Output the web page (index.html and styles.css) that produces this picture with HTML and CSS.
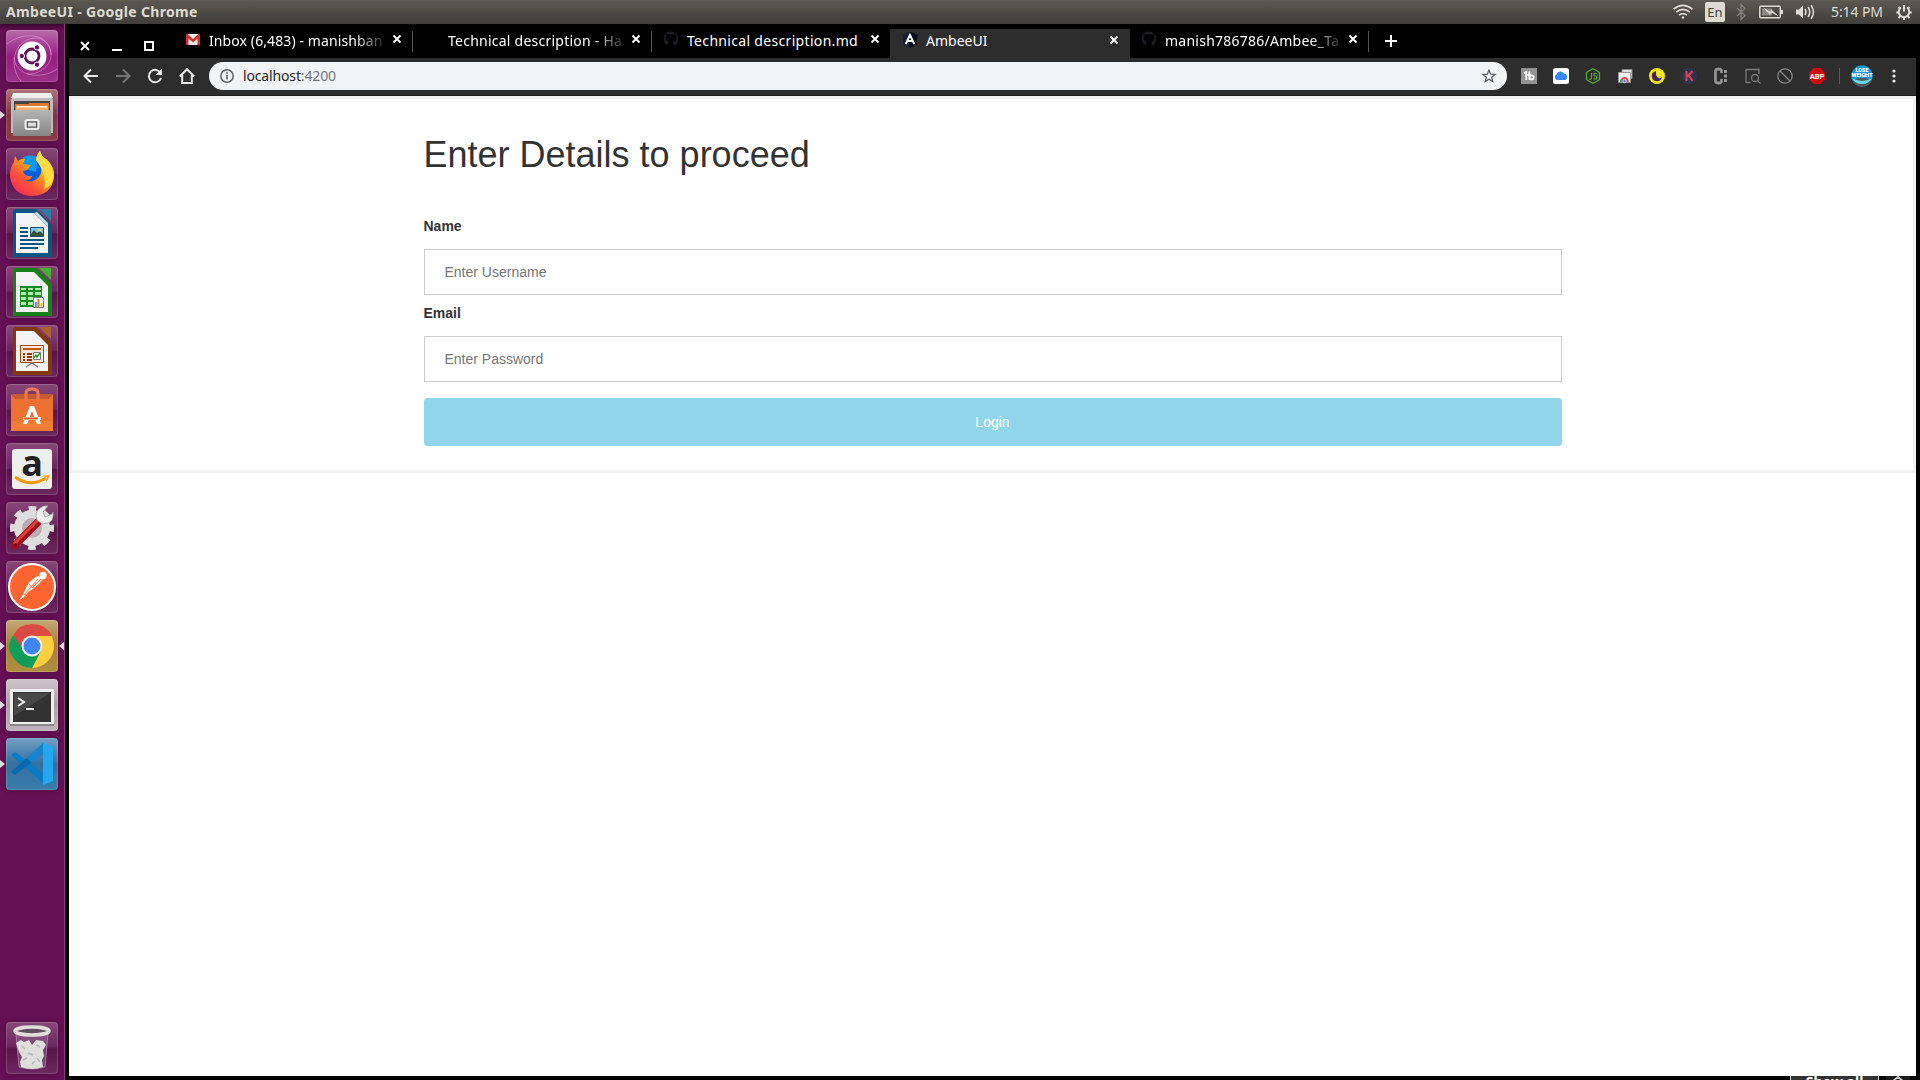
FILE: index.html
```html
<!DOCTYPE html>
<html lang="en">
<head>
<meta charset="utf-8">
<title>AmbeeUI</title>
<link rel="stylesheet" href="styles.css">
</head>
<body>
<header class="panel">
  <span class="panel-title">AmbeeUI - Google Chrome</span>
  <div class="indicators">
    <svg class="wifi" width="20" height="16" viewBox="0 0 20 16" fill="none" stroke="#dfdbd2" stroke-width="1.6"><path d="M.5 5.2Q10-2.6 19.5 5.2M3.2 8.2Q10 2.6 16.800 8.200M6 11.200Q10 8 14 11.200"/><circle cx="10" cy="13.500" r="1.200" fill="#dfdbd2" stroke="none"/></svg>
    <span class="lang">En</span>
    <svg class="bt" width="10" height="18" viewBox="0 0 10 18" fill="none" stroke="#85837b" stroke-width="1.300"><path d="M1 5l8 7.500-4 4V1.500l4 4L1 13"/></svg>
    <svg class="battery" width="24" height="14" viewBox="0 0 24 14"><rect x=".8" y="1.300" width="20.500" height="11.400" rx="1" fill="none" stroke="#dfdbd2" stroke-width="1.500"/><path d="M22 5h2v4h-2z" fill="#dfdbd2"/><path d="M3 3.500h10v7H3z" fill="#8b897f"/><path d="M5.500 3.500l6 4 1-2.500 6 5.500-6.500-3.500-1 2.500z" fill="#dfdbd2" stroke="#dfdbd2" stroke-width=".6"/></svg>
    <svg class="sound" width="21" height="16" viewBox="0 0 21 16"><path d="M1 5.500h3l4-4v13l-4-4H1z" fill="#dfdbd2"/><path d="M10 5q2 3 0 6M13 3q3.500 5 0 10M16 1.200q5 6.800 0 13.600" fill="none" stroke="#dfdbd2" stroke-width="1.500"/></svg>
    <span class="clock">5:14 PM</span>
    <svg class="gear" width="16" height="16" viewBox="0 0 16 16" fill="none" stroke="#dfdbd2"><path d="M5 3.500a5.300 5.300 0 1 0 6 0" stroke-width="2"/><path d="M8 1v6.500" stroke-width="2"/><path d="M.2 8.500h2.500M13.300 8.500h2.500M2.500 3l1.700 1.700M13.500 3l-1.700 1.700M2.500 14l1.700-1.700M13.500 14l-1.700-1.700M8 13.500V16" stroke-width="2"/></svg>
  </div>
</header>

<div class="desktop">
  <nav class="launcher">
    <div class="tile dash"><svg viewBox="0 0 52 52"><g fill="none" stroke="#e5a9d7" stroke-opacity=".5"><path d="M1 14C17 1 42 3 45 22c2 13-12 23-24 22M15 51C2 36 8 10 28 8c10-1 17 8 17 17M51 39C36 50 9 47 8 27"/></g><circle cx="26" cy="26" r="14.500" fill="#fff"/><circle cx="26" cy="26" r="7" fill="none" stroke="#611253" stroke-width="2.800"/><g fill="#611253" stroke="#fff"><circle cx="15.800" cy="26" r="2.700"/><circle cx="31" cy="17.300" r="2.700"/><circle cx="31" cy="34.700" r="2.700"/></g></svg></div>
    <div class="tile files running"><svg viewBox="0 0 52 52"><path d="M8 4h36l3 7v33H5V11z" fill="#bdbdbd"/><path d="M7 4h38l2 5H5z" fill="#eee"/><path d="M8 12h36v11H8z" fill="#444"/><path d="M9 15h13l2-1h19v8H9z" fill="#dc7835"/><path d="M10 17h32v5H10z" fill="#f7ad62"/><path d="M11 17h30v1.500H11z" fill="#fff0dc"/><path d="M7 22l2-1h34l2 1v25H7z" fill="url(#steel)"/><rect x="19.500" y="31" width="13" height="9" rx="2" fill="none" stroke="#ededed" stroke-width="2"/><rect x="21.500" y="33" width="9" height="5" fill="#ddd" stroke="#555"/></svg></div>
    <div class="tile"><svg viewBox="0 0 52 52"><defs><linearGradient id="fox" x1=".9" y1="0" x2=".1" y2="1"><stop stop-color="#fff44f"/><stop offset=".4" stop-color="#ffad16"/><stop offset=".65" stop-color="#ff5636"/><stop offset="1" stop-color="#f42662"/></linearGradient></defs><circle cx="26" cy="25" r="17" fill="#075fda"/><path d="M17 9q8-3 15 0l-2 15-11-3z" fill="#0a9af1"/><path d="M9 8l3 5q4-3 7-2l-2 5 8 1-4 5-4 1q1 6 9 5-1 5-8 4 8 4 15-3Q39 21 30 12q1-6 4-9 1 5 6 8 8 6 8 18-2 18-22 19Q6 47 4 28q0-9 4-14z" fill="url(#fox)"/><path d="M30 12q1-6 4-9 1 5 6 8 8 7 8 17-2 11-10 13 4-13-8-29" fill="#ffdc3f"/></svg></div>
    <div class="tile"><svg viewBox="0 0 52 52"><path d="M9 2h21l16 16v32H7V4z" fill="#075683"/><path d="M10 6h18l14 14v26H10z" fill="#f3f3f3"/><path d="M28 6l14 14v-4L31 5z" fill="#c6dce9"/><path d="M33 2h12v12z" fill="#2b7ca8"/><path d="M14 21h8M14 25h8M14 29h8M14 33h24M14 37h24M14 41h18" stroke="#075683" stroke-width="1.800"/><path d="M24.500 20.500h13v9h-13z" fill="#79caec" stroke="#164f73"/><path d="M25 29v-2l3-4 3 3 3-2 3 3v2z" fill="#3a4c3a"/><circle cx="34" cy="23" r="1.500" fill="#ffd641"/></svg></div>
    <div class="tile"><svg viewBox="0 0 52 52"><path d="M9 2h21l16 16v32H7V4z" fill="#168116"/><path d="M10 6h18l14 14v26H10z" fill="#f3f3f3"/><path d="M33 2h12v12z" fill="#48ae36"/><path d="M14 20h22v21H14z" fill="#178c21"/><path d="M15 22h5v2h-5zM22 22h5v2h-5zM29 22h6v2h-6zM15 26h5v3h-5zM22 26h5v3h-5zM29 26h6v3h-6zM15 31h5v3h-5zM22 31h5v3h-5zM15 36h5v3h-5zM22 36h5v3h-5z" fill="#b4f1a8"/><path d="M27.500 31.500h10v10h-10z" fill="#fff" stroke="#777"/><path d="M29 36h2v5h-2z" fill="#38a6e4"/><path d="M31.500 33h2v8h-2z" fill="#ef6f15"/><path d="M34.500 37h2v4h-2z" fill="#efc51c"/></svg></div>
    <div class="tile"><svg viewBox="0 0 52 52"><path d="M9 2h21l16 16v32H7V4z" fill="#81390c"/><path d="M10 6h18l14 14v26H10z" fill="#f3f3f3"/><path d="M33 2h12v12z" fill="#af602e"/><path d="M14.500 20.500h23v17h-23z" fill="#fce5d4" stroke="#a44713"/><path d="M17 24h18" stroke="#cc5515" stroke-width="2"/><path d="M17 29h2M21 29h5M17 32h2M21 32h5M17 35h2M21 35h5" stroke="#8f390d" stroke-width="1.800"/><path d="M27.500 27.500h7v7h-7z" fill="#fff" stroke="#777"/><path d="M28 33l2-3 1 2 3-4" fill="none" stroke="#27a031" stroke-width="1.500"/><path d="M26 38l-6 4M26 38l6 4M25 38h2" stroke="#777" stroke-width="1.500"/></svg></div>
    <div class="tile"><svg viewBox="0 0 52 52"><path d="M5 10l4 4h34l4-4v37H5z" fill="#ef712f"/><path d="M6 10h40l-3 5H9z" fill="#c65a36"/><path d="M5 37h42v10H5z" fill="#f27b35"/><path d="M20 17V9q0-4 6-4t6 4v8" fill="none" stroke="#e97955" stroke-width="3"/><path d="M24 22h4l7 18h-4l-5-13-5 13h-4z" fill="#fff"/><path d="M17 33h18v3H17z" fill="#fff"/><path d="M18 33.500h14v2H18z" fill="#ed5c24"/></svg></div>
    <div class="tile"><svg viewBox="0 0 52 52"><rect x="6" y="6" width="40" height="40" rx="3" fill="#eee"/><text x="26" y="33" text-anchor="middle" font-family="Open Sans, sans-serif" font-size="36" font-weight="700" fill="#222">a</text><path d="M9 34q15 11 31 1" fill="none" stroke="#ff9900" stroke-width="2.800"/><path d="M35 33l8-1q0 5-3 7l1-5z" fill="#ff9900"/></svg></div>
    <div class="tile"><svg viewBox="0 0 52 52"><circle cx="26" cy="26" r="12" fill="#b9adb6"/><g fill="none"><circle cx="26" cy="26" r="14" stroke="#dedede" stroke-width="8"/><circle cx="26" cy="26" r="19.500" stroke="#dedede" stroke-width="5" stroke-dasharray="7.660 7.660" stroke-dashoffset="4"/><path d="M9 43L33 19" stroke="#a50e17" stroke-width="7.500" stroke-linecap="round"/><path d="M9 41L31 19" stroke="#d84142" stroke-width="3" stroke-linecap="round"/></g><path d="M31 18q-3-8 3-12 4-3 8-2l-5 6 2 5 7-3 1-2q1 9-5 11l-6 1z" fill="#eee" stroke="#999" stroke-width=".7"/><circle cx="9.500" cy="42.500" r="1.300" fill="#600"/></svg></div>
    <div class="tile"><svg viewBox="0 0 52 52"><circle cx="26" cy="26" r="23" fill="#ff6530" stroke="#fff" stroke-width="2"/><circle cx="37" cy="14.500" r="3.700" fill="#fff"/><path d="M32 15q-9 4-13 14l-2 5-4 5q6-3 9-8 9-5 15-13z" fill="#fff"/><path d="M32 18L18 34M35 18l-9 9M23 23l4 4" stroke="#ff6530" stroke-width="1"/></svg></div>
    <div class="tile chrome running active"><svg viewBox="0 0 52 52"><circle cx="26" cy="26" r="22" fill="#ffcd40"/><path d="M26 26L7 15Q-1 28 8 39q7 9 18 9l9-17z" fill="#109d58"/><path d="M7 15Q13 4 26 4q14 0 20 12H26l-9 13z" fill="#db4b42"/><circle cx="26" cy="26" r="10.500" fill="#f1f1f1"/><circle cx="26" cy="26" r="8.500" fill="#4286f5"/></svg></div>
    <div class="tile terminal running"><svg viewBox="0 0 52 52"><rect x="4" y="10" width="44" height="37" rx="1" fill="#eee"/><path d="M4 45h44v2H4z" fill="#888"/><path d="M7 13h38v30H7z" fill="#323232"/><path d="M8 14h36L8 37z" fill="#484848"/><path d="M12 19l6 4-6 4" fill="none" stroke="#eee" stroke-width="2"/><path d="M20 30h8" stroke="#eee" stroke-width="2"/></svg></div>
    <div class="tile code running"><svg viewBox="0 0 52 52"><path d="M5 17l4-3 29 22v10z" fill="#087bc7"/><path d="M5 34l4 3 29-22V5z" fill="#0969b0"/><path d="M37 5l10 4v34l-10 4z" fill="#24a7f1"/><path d="M21 20L37 5v11L26 25z" fill="#1685ce"/></svg></div>
    <div class="tile trash"><svg viewBox="0 0 52 52"><path d="M10 12h32l-3 33q-13 4-26 0z" fill="#a183a0" fill-opacity=".35" stroke="#b795b2" stroke-width=".7"/><path d="M10 21l5-3 3 2 5-2 3 5 4-5 7 1 3 4-3 5 1 6-2 4 1 7q-11 4-22 0l-1-5 2-5-3-5z" fill="#dededb"/><path d="M16 24l3 3M30 23l4 2M22 31l5 2M17 38l4-2M31 36l3 4M26 42l3-3" fill="none" stroke="#b7b8b5" stroke-width="1.500"/><ellipse cx="26" cy="9" rx="17" ry="4" fill="#66505f" stroke="#dedfdc" stroke-width="3.500"/></svg></div>
  </nav>

  <main class="window">
    <div class="tabstrip">
      <div class="controls">
        <svg width="10" height="10" viewBox="0 0 10 10"><path d="M1 1l8 8M9 1L1 9" stroke="#fff" stroke-width="1.800"/></svg>
        <svg width="10" height="10" viewBox="0 0 10 10"><path d="M0 9h10" stroke="#fff" stroke-width="2"/></svg>
        <svg width="10" height="10" viewBox="0 0 10 10"><path d="M1 1h8v8H1z" fill="none" stroke="#fff" stroke-width="2"/></svg>
      </div>
      <div class="tab"><svg class="fav" viewBox="0 0 16 16"><path d="M1 3h14v11H1z" fill="#eee"/><path d="M1 3h2l5 5 5-5h2v11h-2.500V7.500L8 11.500l-4.500-4V14H1z" fill="#d93025"/><path d="M3 3h10L8 7.500z" fill="#fff"/></svg><span class="label t1 fade">Inbox (6,483) - manishban</span><svg class="close" viewBox="0 0 10 10"><path d="M1.500 1.500l7 7M8.500 1.500l-7 7"/></svg></div>
      <div class="tab"><span class="fav"></span><span class="label t2 fade">Technical description - Ha</span><svg class="close" viewBox="0 0 10 10"><path d="M1.500 1.500l7 7M8.500 1.500l-7 7"/></svg></div>
      <div class="tab before-active"><svg class="fav" viewBox="0 0 16 16"><path id="cat" d="M5.500 15v-2q-3 .5-4-1.500M5.500 15.200C-2 12-.5 0 8 .5c8.500.3 10 11.500 2.500 14.700v-3l-.5-1.500c5-1 3-5 2.500-6V2.700l-2 .8q-2.500-.7-5 0l-2-.8v2C2 7 2.500 10 6 10.700l-.5 1.500z" fill="#191c20"/></svg><span class="label t3">Technical description.md</span><svg class="close" viewBox="0 0 10 10"><path d="M1.500 1.500l7 7M8.500 1.500l-7 7"/></svg></div>
      <div class="tab current"><svg class="fav" viewBox="0 0 16 16"><path d="M8 0l7.500 2.500-1 10L8 16l-6.500-3.500-1-10z" fill="#1c1d2e"/><path d="M8 0l7.500 2.500-1 10L8 16z" fill="#090a1b"/><path d="M3.700 12L8 3l4.300 9M5.500 9h5" fill="none" stroke="#fff" stroke-width="1.900"/></svg><span class="label t4">AmbeeUI</span><svg class="close" viewBox="0 0 10 10"><path d="M1.500 1.500l7 7M8.500 1.500l-7 7"/></svg></div>
      <div class="tab"><svg class="fav" viewBox="0 0 16 16"><use href="#cat"/></svg><span class="label t5 fade">manish786786/Ambee_Ta</span><svg class="close" viewBox="0 0 10 10"><path d="M1.500 1.500l7 7M8.500 1.500l-7 7"/></svg></div>
      <svg class="plus" width="12" height="12" viewBox="0 0 12 12"><path d="M6 0v12M0 6h12" stroke="#fff" stroke-width="2"/></svg>
    </div>

    <div class="toolbar">
      <div class="nav">
        <svg viewBox="0 0 16 16"><path d="M15 8H2M8 1.500L1.500 8 8 14.500"/></svg>
        <svg class="disabled" viewBox="0 0 16 16"><path d="M1 8h13M8 1.500L14.500 8 8 14.500"/></svg>
        <svg viewBox="0 0 16 16"><path d="M13.500 5A6.200 6.200 0 1 0 14 10"/><path d="M15 .5V7H8.500z" fill="#e8e8e8" stroke="none"/></svg>
        <svg viewBox="0 0 16 16"><path d="M.8 8.500L8 1.200l7.200 7.300M3.200 7v8h9.600V7"/></svg>
      </div>
      <div class="omnibox">
        <svg width="14" height="14" viewBox="0 0 14 14"><circle cx="7" cy="7" r="6.200" fill="none" stroke="#5f6368" stroke-width="1.500"/><path d="M7 6v4.500M7 3v1.700" stroke="#5f6368" stroke-width="1.600"/></svg>
        <span class="url">localhost<span class="port">:4200</span></span>
        <svg class="star" width="14" height="14" viewBox="0 0 14 14"><path d="M7 1.200l1.700 4 4.300.3-3.300 2.800 1 4.200L7 10.300l-3.700 2.200 1-4.200L1 5.500l4.300-.3z" fill="none" stroke="#5a5d61" stroke-width="1.300"/></svg>
      </div>
      <div class="extensions">
        <svg viewBox="0 0 16 16"><path d="M0 0h16v16H0z" fill="#929292"/><path d="M3 5.200l2.300-1.200v8M8.300 3.500v8M5.300 6.800h4.500" fill="none" stroke="#fff" stroke-width="1.700"/><circle cx="10.600" cy="9.400" r="2" fill="none" stroke="#fff" stroke-width="1.700"/></svg>
        <svg viewBox="0 0 16 16"><rect width="16" height="16" rx="2.500" fill="#fff"/><path d="M4 12a3 3 0 0 1-.3-5.700A4 4 0 0 1 11 5.500a3.500 3.500 0 0 1 1.500 6.500z" fill="#3489f5"/></svg>
        <svg viewBox="0 0 16 16"><path d="M8 .7L14.500 4.300v7.400L8 15.300 1.500 11.700V4.300z" fill="none" stroke="#56a832" stroke-width="1.300"/><path d="M6.500 5v5q0 1.500-2.500 1.200M12 5.500H9v2.300l2.700.4v2.600H8.500" fill="none" stroke="#56a832" stroke-width="1.200"/></svg>
        <svg viewBox="0 0 16 16"><path d="M5 1.500h10v9H5z" fill="#ddd" stroke="#888"/><path d="M1.500 4.500h12v10h-12z" fill="#f2f2f2" stroke="#999"/><path d="M3 14q1-5 4.500-5t4.500 5z" fill="#de4839"/><path d="M3 14q0-2 1-3l3 3z" fill="#35a853"/><circle cx="7.500" cy="13" r="1.700" fill="#4d85ea" stroke="#fff" stroke-width=".6"/></svg>
        <svg viewBox="0 0 16 16"><circle cx="8" cy="8" r="8" fill="#f8e71c"/><path d="M7 3a5.200 5.200 0 1 0 6 6.300Q11.500 10.500 9.700 10 6.500 8.500 7 3z" fill="#472466"/></svg>
        <svg viewBox="0 0 16 16"><circle cx="8" cy="8" r="8" fill="#2b344b"/><path d="M5.500 3v10M11.500 3L6.500 8.500M8 7.500l3.500 5.500" stroke="#d9434f" stroke-width="2"/></svg>
        <svg viewBox="0 0 16 16"><path d="M8.500 5V3q0-2-3-2T2.500 3v10q0 2 3 2t3-2v-2" fill="none" stroke="#929292" stroke-width="2.800"/><path d="M11 2h3v3h-3zM11 6.500h3v3h-3zM11 11h3v3h-3z" fill="#929292"/></svg>
        <svg viewBox="0 0 16 16" fill="none" stroke="#7a7a7a" stroke-width="1.300"><path d="M5.500 14.500H1v-13h13V6"/><circle cx="10" cy="10" r="3.500"/><path d="M12.500 12.500l3 3"/></svg>
        <svg viewBox="0 0 16 16" fill="none" stroke="#898989" stroke-width="1.300"><circle cx="8" cy="8" r="7.200"/><path d="M3 3l10 10"/></svg>
        <svg viewBox="0 0 16 16"><path d="M4.700 0h6.600L16 4.700v6.600L11.300 16H4.700L0 11.300V4.700z" fill="#d40b0c"/><text x="8" y="10.800" text-anchor="middle" font-family="Roboto, sans-serif" font-size="7.500" font-weight="700" fill="#fff">ABP</text></svg>
      </div>
      <span class="divider"></span>
      <svg class="avatar" viewBox="0 0 22 22"><circle cx="11" cy="11" r="10.700" fill="#1797d4"/><path d="M1 15q10-4 20 0-2 6-10 6.500Q4 21 1 15z" fill="#555"/><path d="M1 13q10 6 20 0-3 6-10 6T1 13z" fill="#65d9ec"/><g fill="#fff" font-family="Roboto, sans-serif" font-weight="900" text-anchor="middle"><text x="11" y="6.800" font-size="5.500">LOSE</text><text x="11" y="12" font-size="5.800" textLength="21" lengthAdjust="spacingAndGlyphs">WEIGHT</text></g></svg>
      <svg class="menu" width="4" height="14" viewBox="0 0 4 14" fill="#eee"><circle cx="2" cy="2" r="1.600"/><circle cx="2" cy="7" r="1.600"/><circle cx="2" cy="12" r="1.600"/></svg>
    </div>

    <section class="page">
      <form class="login">
        <div class="container">
          <h2>Enter Details to proceed</h2>
          <label for="user">Name</label>
          <input id="user" type="text" placeholder="Enter Username">
          <label for="pass">Email</label>
          <input id="pass" type="text" placeholder="Enter Password">
          <button type="button">Login</button>
        </div>
      </form>
    </section>
    <div class="underlay"><span class="show-all">Show all</span><span class="caret"><svg width="12" height="4" viewBox="0 0 12 4"><path d="M1 5l5-4 5 4" fill="none" stroke="#ccc" stroke-width="1.800"/></svg></span></div>
  </main>
</div>
<svg width="0" height="0" class="defs"><defs><linearGradient id="steel" x2="0" y2="1"><stop stop-color="#b5b5b5"/><stop offset="1" stop-color="#868686"/></linearGradient></defs></svg>
</body>
</html>
```
FILE: styles.css
```css
* { box-sizing: border-box; }
body {
  margin: 0;
  width: 1920px;
  height: 1080px;
  overflow: hidden;
  display: flex;
  flex-direction: column;
  background: #000;
  font-family: "Noto Sans", sans-serif;
}
svg { display: block; flex: none; overflow: visible; }
.defs { position: absolute; }

.panel {
  height: 24px;
  flex: none;
  display: flex;
  align-items: center;
  justify-content: space-between;
  padding: 0 8px 0 6px;
  background: linear-gradient(#5f5d4f 0, #59564e 2px, #3f3e39 24px);
  color: #dfdbd2;
  font-size: 14px;
}
.panel-title { padding-bottom: 2px; font-weight: 700; letter-spacing: .33px; white-space: nowrap; }
.indicators { display: flex; align-items: center; }
.lang {
  width: 20px;
  height: 20px;
  margin: 0 11px 0 12px;
  border-radius: 2px;
  background: #dfdbd2;
  color: #45443f;
  font-size: 13px;
  line-height: 20px;
  text-align: center;
}
.battery { margin: 0 12px 0 13px; }
.clock { width: 52px; margin: 0 13px 0 15px; padding-bottom: 2px; white-space: nowrap; letter-spacing: -.1px; }

.desktop { flex: 1; display: flex; min-height: 0; }
.launcher {
  width: 65px;
  flex: none;
  display: flex;
  flex-direction: column;
  gap: 7px;
  padding: 6px 0 6px 6px;
  background: linear-gradient(#3d0733 0, #651054 6px);
  border-right: 1px solid #8b3b7b;
}
.tile {
  position: relative;
  width: 52px;
  height: 52px;
  flex: none;
  border-radius: 4px;
  background: linear-gradient(#894778, #6b2560 48%, #591449 52%, #6c2860);
  box-shadow: inset 0 0 0 1px rgba(255,255,255,.16), 0 0 5px rgba(30,0,25,.35);
}
.tile svg { width: 52px; height: 52px; }
.dash { background: linear-gradient(#b96cab, #981c83 50%, #9b3389); }
.files { background: linear-gradient(#ae747b, #813443 50%, #8d3c44); }
.chrome { background: linear-gradient(#c6a777, #a38138 50%, #b28e3f); }
.terminal { background: linear-gradient(#cfc3cc, #aaa0a7 50%, #bcb4ba); }
.code { background: linear-gradient(#739fc2, #356f9f 50%, #397caa); }
.trash { margin-top: auto; }
.running::before, .active::after {
  content: "";
  position: absolute;
  top: 22px;
  border: 4px solid transparent;
}
.running::before { left: -6px; border-left: 5px solid #ddd; border-right: 0; }
.active::after { right: -6px; border-right: 5px solid #ddd; border-left: 0; }

.window {
  flex: 1;
  min-width: 0;
  padding: 0 4px;
  display: flex;
  flex-direction: column;
}
.tabstrip { height: 34px; flex: none; display: flex; color: #fff; }
.controls { width: 105px; padding: 17px 0 0 11px; display: flex; gap: 22px; }
.tab {
  position: relative;
  width: 239px;
  height: 34px;
  padding: 0 11px 4px 11px;
  display: flex;
  align-items: center;
}
.tab::after {
  content: "";
  position: absolute;
  right: 0;
  top: 7px;
  width: 1px;
  height: 21px;
  background: #555;
}
.before-active::after, .current::after { display: none; }
.before-active { border-bottom-right-radius: 8px; }
.current {
  width: 240px;
  height: 29px;
  margin-top: 5px;
  margin-left: -1px;
  padding: 0 11px 8px 12px;
  background: #2d2d2d;
}
.fav { width: 16px; height: 16px; flex: none; overflow: hidden; }
.label {
  width: 176px;
  margin-left: 8px;
  padding-top: 4px;
  font-size: 14px;
  line-height: 20px;
  white-space: nowrap;
}
.current .label { padding-top: 2px; }
.t1 { letter-spacing: .1px; }
.t2 { letter-spacing: .24px; }
.t3 { letter-spacing: .32px; }
.t5 { letter-spacing: .25px; }
.fade { -webkit-mask-image: linear-gradient(90deg, #000 145px, transparent 180px); mask-image: linear-gradient(90deg, #000 145px, transparent 180px); }
.close { width: 10px; height: 10px; margin-left: 7px; stroke: #fff; stroke-width: 1.900; }
.plus { margin: 11px 0 0 16px; }

.toolbar {
  height: 38px;
  flex: none;
  display: flex;
  align-items: center;
  padding: 0 20px 2px 14px;
  background: #2d2d2d;
  border-bottom: 1px solid #1c1c1c;
}
.nav { display: flex; gap: 16px; width: 126px; }
.nav svg { width: 16px; height: 16px; fill: none; stroke: #e8e8e8; stroke-width: 2; }
.nav .disabled { stroke: #777; }
.omnibox {
  width: 1298px;
  height: 28px;
  padding: 0 11px;
  border-radius: 14px;
  background: #f1f3f4;
  display: flex;
  align-items: center;
}
.url { margin-left: 9px; font-size: 14px; line-height: 20px; color: #25272a; letter-spacing: -.15px; }
.port { color: #70757a; }
.star { margin-left: auto; }
.extensions { display: flex; gap: 16px; margin-left: 14px; }
.extensions svg { width: 16px; height: 16px; }
.divider { width: 1px; height: 16px; margin: 0 11px 0 14px; background: #5a5a5a; }
.avatar { width: 22px; height: 22px; }
.menu { margin-left: auto; }

.page { flex: 1; background: #fff; color: #333; font: 14px/20px "Liberation Sans", sans-serif; }
.login { height: 377px; border: 3px solid #f1f1f1; }
.container { width: 1170px; margin: 0 auto; padding: 16px; }
h2 { margin: 20px 0 41px; font-size: 36px; font-weight: 400; line-height: 40px; }
label { display: block; margin-bottom: 13px; font-weight: 700; }
input {
  display: block;
  width: 100%;
  height: 46px;
  margin: 8px 0;
  padding: 12px 20px;
  border: 1px solid #ccc;
  font: inherit;
}
input::placeholder { color: #757575; }
button {
  display: block;
  width: 100%;
  height: 48px;
  margin-top: 16px;
  border: 0;
  border-radius: 4px;
  background: #91d5eb;
  color: #fff;
  font: inherit;
}
.underlay { height: 4px; flex: none; overflow: hidden; display: flex; justify-content: flex-end; padding-right: 6px; }
.show-all {
  width: 89px;
  margin-right: 7px;
  border: solid #ddd;
  border-width: 0 1px;
  background: #333;
  color: #fff;
  font-size: 14px;
  font-weight: 700;
  line-height: 12px;
  text-align: center;
}
.caret { width: 24px; padding-left: 6px; background: #1c1c1c; }
```
